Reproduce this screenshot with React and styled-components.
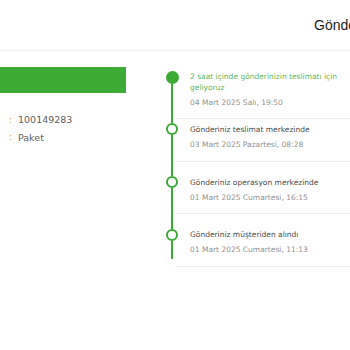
import styled, { createGlobalStyle } from "styled-components";

const GlobalStyle = createGlobalStyle`
  html, body {
    margin: 0;
    padding: 0;
    background: #ffffff;
    overflow: hidden;
  }
  body {
    font-family: "DejaVu Sans", "Liberation Sans", sans-serif;
  }
`;

const steps = [
  {
    title: "2 saat içinde gönderinizin teslimatı için geliyoruz",
    date: "04 Mart 2025 Salı, 19:50",
    active: true,
    padTop: 4,
    padBottom: 10,
  },
  {
    title: "Gönderiniz teslimat merkezinde",
    date: "03 Mart 2025 Pazartesi, 08:28",
    padTop: 4.5,
    padBottom: 11.5,
  },
  {
    title: "Gönderiniz operasyon merkezinde",
    date: "01 Mart 2025 Cumartesi, 16:15",
    padTop: 14.5,
    padBottom: 10.5,
  },
  {
    title: "Gönderiniz müşteriden alındı",
    date: "01 Mart 2025 Cumartesi, 11:13",
    padTop: 15,
    padBottom: 11,
  },
];

const App = () => {
  return (
    <>
      <GlobalStyle />
      <Page>
        <Header>
          <HeaderTitle>Gönderi Takibi</HeaderTitle>
        </Header>
        <Main>
          <InfoColumn>
            <InfoBar>TESLİMAT DURUMU: YOLDA</InfoBar>
            <InfoList>
              <InfoRow>
                <InfoLabel>Takip Numarası</InfoLabel>
                <Colon>:</Colon>
                <InfoValue>100149283</InfoValue>
              </InfoRow>
              <InfoRow>
                <InfoLabel>Gönderi Tipi</InfoLabel>
                <Colon>:</Colon>
                <InfoValue>Paket</InfoValue>
              </InfoRow>
            </InfoList>
          </InfoColumn>

          <Timeline>
            {steps.map((s, i) => (
              <Step key={i}>
                <Marker>
                  <Segment $h={s.padTop - 0.5} $hidden={i === 0} />
                  <Dot $filled={s.active} />
                  <Segment $grow $last={i === steps.length - 1} />
                </Marker>
                <StepBody $top={s.padTop} $bottom={s.padBottom}>
                  <StepTitle $active={s.active}>{s.title}</StepTitle>
                  <StepDate>{s.date}</StepDate>
                </StepBody>
              </Step>
            ))}
          </Timeline>
        </Main>
      </Page>
    </>
  );
};

export default App;

const Page = styled.div`
  width: 700px;
`;

const Header = styled.div`
  height: 50px;
  border-bottom: 1px solid #f1f1f1;
  display: flex;
  align-items: center;
  padding-left: 314px;
`;

const HeaderTitle = styled.div`
  font-family: "Liberation Sans", Arial, sans-serif;
  font-size: 14px;
  color: #1e1e1e;
  white-space: nowrap;
`;

const Main = styled.div`
  display: flex;
  padding-top: 16px;
`;

const InfoColumn = styled.div`
  margin-left: -160px;
  width: 286px;
  flex-shrink: 0;
`;

const InfoBar = styled.div`
  height: 26px;
  line-height: 26px;
  background: #3caa34;
  color: #e8f5e6;
  font-size: 10px;
  padding-left: 16px;
  white-space: nowrap;
`;

const InfoList = styled.div`
  margin-top: 18px;
  display: flex;
  flex-direction: column;
`;

const InfoRow = styled.div`
  display: flex;
  align-items: center;
  height: 17.5px;
  font-size: 9.5px;
`;

const InfoLabel = styled.div`
  width: 169px;
  color: #666;
  white-space: nowrap;
`;

const Colon = styled.span`
  width: 9px;
  color: #eb9a2c;
  font-size: 9px;
`;

const InfoValue = styled.span`
  color: #5e5e5e;
`;

const Timeline = styled.div`
  margin-left: 34px;
  width: 420px;
  flex-shrink: 0;
`;

const Step = styled.div`
  display: flex;
`;

const Marker = styled.div`
  width: 24px;
  margin-right: -9px;
  display: flex;
  flex-direction: column;
  align-items: center;
  position: relative;
  z-index: 1;
`;

const Segment = styled.div`
  width: 2px;
  background: ${(p) => (p.$hidden ? "transparent" : "#3caa34")};
  height: ${(p) => (p.$grow ? "auto" : `${p.$h}px`)};
  flex: ${(p) => (p.$grow ? 1 : "none")};
  margin-bottom: ${(p) => (p.$last ? "8px" : "0")};
`;

const Dot = styled.div`
  width: ${(p) => (p.$filled ? "13px" : "12px")};
  height: ${(p) => (p.$filled ? "13px" : "12px")};
  box-sizing: border-box;
  border-radius: 50%;
  border: 2px solid #3caa34;
  background: ${(p) => (p.$filled ? "#3caa34" : "#ffffff")};
  flex-shrink: 0;
`;

const StepBody = styled.div`
  flex: 1;
  padding: ${(p) => p.$top}px 0 ${(p) => p.$bottom}px 15px;
  border-bottom: 1px solid #eeeeee;
`;

const StepTitle = styled.div`
  font-size: 7.5px;
  line-height: 11px;
  color: ${(p) => (p.$active ? "#62b65b" : "#4a4a4a")};
  width: 150px;
`;

const StepDate = styled.div`
  font-size: 7.5px;
  line-height: 11px;
  color: #929292;
  margin-top: 4px;
`;
